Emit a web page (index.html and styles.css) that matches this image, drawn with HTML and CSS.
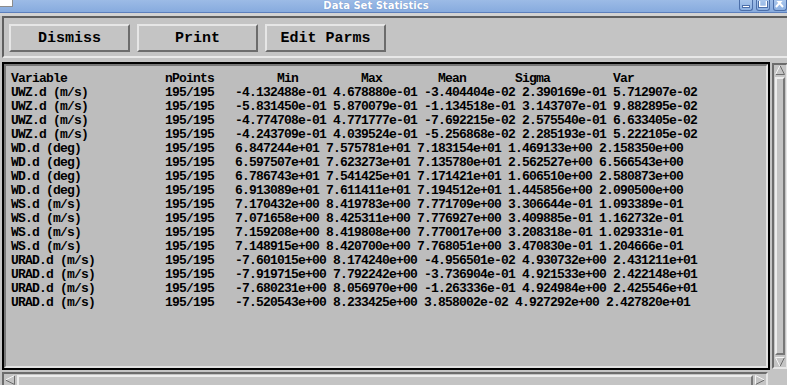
FILE: index.html
```html
<!DOCTYPE html>
<html lang="en">
<head>
  <meta charset="UTF-8">
  <title>Data Set Statistics</title>
  <link rel="stylesheet" href="styles.css">
</head>
<body>

  <div class="titlebar">
    <span class="win-icon"></span>
    <span class="title">Data Set Statistics</span>
    <div class="win-buttons">
      <span class="wbtn">
        <svg width="10" height="8" viewBox="0 0 10 8"><rect x="1.5" y="4.5" width="7" height="2" fill="#fff" stroke="#4c6fa9"/></svg>
      </span>
      <span class="wbtn">
        <svg width="10" height="8" viewBox="0 0 10 8"><rect x="1.5" y="-2.5" width="7" height="8" fill="none" stroke="#fff" stroke-width="1.5"/><rect x="0.5" y="-3.5" width="9" height="10" fill="none" stroke="#4c6fa9"/></svg>
      </span>
      <span class="wbtn">
        <svg width="10" height="8" viewBox="0 0 10 8"><path d="M1 -2 L8 6 M8 -2 L1 6" stroke="#fff" stroke-width="2"/></svg>
      </span>
    </div>
  </div>
  <div class="edge"></div>

  <div class="toolbar">
    <button class="btn">Dismiss</button>
    <button class="btn">Print</button>
    <button class="btn">Edit Parms</button>
  </div>

  <div class="main">
    <div class="textframe">
      <div class="textbox">
<pre class="stats">Variable              nPoints         Min         Max        Mean       Sigma         Var
UWZ.d (m/s)           195/195   -4.132488e-01 4.678880e-01 -3.404404e-02 2.390169e-01 5.712907e-02
UWZ.d (m/s)           195/195   -5.831450e-01 5.870079e-01 -1.134518e-01 3.143707e-01 9.882895e-02
UWZ.d (m/s)           195/195   -4.774708e-01 4.771777e-01 -7.692215e-02 2.575540e-01 6.633405e-02
UWZ.d (m/s)           195/195   -4.243709e-01 4.039524e-01 -5.256868e-02 2.285193e-01 5.222105e-02
WD.d (deg)            195/195   6.847244e+01 7.575781e+01 7.183154e+01 1.469133e+00 2.158350e+00
WD.d (deg)            195/195   6.597507e+01 7.623273e+01 7.135780e+01 2.562527e+00 6.566543e+00
WD.d (deg)            195/195   6.786743e+01 7.541425e+01 7.171421e+01 1.606510e+00 2.580873e+00
WD.d (deg)            195/195   6.913089e+01 7.611411e+01 7.194512e+01 1.445856e+00 2.090500e+00
WS.d (m/s)            195/195   7.170432e+00 8.419783e+00 7.771709e+00 3.306644e-01 1.093389e-01
WS.d (m/s)            195/195   7.071658e+00 8.425311e+00 7.776927e+00 3.409885e-01 1.162732e-01
WS.d (m/s)            195/195   7.159208e+00 8.419808e+00 7.770017e+00 3.208318e-01 1.029331e-01
WS.d (m/s)            195/195   7.148915e+00 8.420700e+00 7.768051e+00 3.470830e-01 1.204666e-01
URAD.d (m/s)          195/195   -7.601015e+00 8.174240e+00 -4.956501e-02 4.930732e+00 2.431211e+01
URAD.d (m/s)          195/195   -7.919715e+00 7.792242e+00 -3.736904e-01 4.921533e+00 2.422148e+01
URAD.d (m/s)          195/195   -7.680231e+00 8.056970e+00 -1.263336e-01 4.924984e+00 2.425546e+01
URAD.d (m/s)          195/195   -7.520543e+00 8.233425e+00 3.858002e-02 4.927292e+00 2.427820e+01</pre>
      </div>
    </div>

    <div class="vscroll">
      <svg class="arrow" width="10" height="10" viewBox="0 0 10 10">
        <polygon points="5,0.5 9.5,9.5 0.5,9.5" fill="#c4c4c4"/>
        <path d="M5 0.5 L9.5 9.5 H0.5" fill="none" stroke="#6c6c6c"/>
        <path d="M0.5 9.5 L5 0.5" fill="none" stroke="#f4f4f4"/>
      </svg>
      <div class="slider"></div>
      <svg class="arrow" width="10" height="10" viewBox="0 0 10 10">
        <polygon points="0.5,0.5 9.5,0.5 5,9.5" fill="#c4c4c4"/>
        <path d="M9.5 0.5 L5 9.5" fill="none" stroke="#6c6c6c"/>
        <path d="M5 9.5 L0.5 0.5 H9.5" fill="none" stroke="#f4f4f4"/>
      </svg>
    </div>
  </div>

  <div class="hbar">
    <div class="hscroll">
      <svg class="arrow" width="10" height="10" viewBox="0 0 10 10">
        <polygon points="0.5,5 9.5,0.5 9.5,9.5" fill="#c4c4c4"/>
        <path d="M9.5 0.5 V9.5 L0.5 5" fill="none" stroke="#6c6c6c"/>
        <path d="M0.5 5 L9.5 0.5" fill="none" stroke="#f4f4f4"/>
      </svg>
      <div class="slider"></div>
      <svg class="arrow" width="10" height="10" viewBox="0 0 10 10">
        <polygon points="0.5,0.5 9.5,5 0.5,9.5" fill="#c4c4c4"/>
        <path d="M9.5 5 L0.5 9.5" fill="none" stroke="#6c6c6c"/>
        <path d="M0.5 9.5 V0.5 L9.5 5" fill="none" stroke="#f4f4f4"/>
      </svg>
    </div>
  </div>

</body>
</html>
```

FILE: styles.css
```css
body {
  margin: 0;
  width: 787px;
  height: 385px;
  overflow: hidden;
  background-color: #c4c4c4;
  font-family: "Liberation Mono", monospace;
}
.titlebar {
  display: flex;
  height: 12px;
  overflow: hidden;
  border-bottom: 1px solid #5d80bd;
  background: linear-gradient(#9cbbe6, #87abde);
}
.win-icon {
  flex-shrink: 0;
  width: 12px;
  height: 6px;
  background-color: #ffffff;
  border-right: 1px solid #8c8c8c;
  border-bottom: 1px solid #8c8c8c;
}
.title {
  flex: 1;
  text-align: center;
  font: bold 10px/12px "DejaVu Sans", sans-serif;
  color: #ffffff;
  text-shadow: 0 0 1px #5a7db8;
}
.win-buttons {
  display: flex;
  flex-shrink: 0;
  gap: 3px;
  width: 48px;
}
.wbtn {
  display: flex;
  align-items: flex-end;
  justify-content: center;
  flex-shrink: 0;
  width: 12px;
  height: 10px;
  border: 1px solid #4c6fa9;
  border-top: none;
  border-radius: 0 0 3px 3px;
  background: linear-gradient(#a9c6ec, #8db1e2);
}
.wbtn svg {
  display: block;
  margin-bottom: 1px;
}
.edge {
  height: 3px;
  background-color: #d3d3d3;
}
.toolbar {
  display: flex;
  gap: 7px;
  margin-left: 2px;
  height: 32px;
  padding: 6px 0 0 5px;
  border-top: 2px solid #5f5f5f;
  border-left: 2px solid #5f5f5f;
  border-bottom: 2px solid #e8e8e8;
}
.btn {
  width: 121px;
  height: 28px;
  padding: 0;
  border: 2px solid;
  border-color: #e6e6e6 #6c6c6c #6c6c6c #e6e6e6;
  background-color: #c4c4c4;
  color: #000000;
  font: bold 15px "Liberation Mono", monospace;
}
.main {
  display: flex;
  height: 308px;
  margin: 4px 0 0 2px;
}
.textframe {
  flex-shrink: 0;
  width: 768px;
  box-sizing: border-box;
  border: 2px solid #000000;
}
.textbox {
  height: 100%;
  box-sizing: border-box;
  padding: 6px 0 0 5px;
  border: 2px solid;
  border-color: #777777 #e3e3e3 #e3e3e3 #777777;
  background-color: #bdbdbd;
}
.stats {
  margin: 0;
  font: bold 13px/14px "Liberation Mono", monospace;
  letter-spacing: -0.8px;
  color: #000000;
}
.vscroll {
  display: flex;
  flex-direction: column;
  gap: 2px;
  flex-shrink: 0;
  width: 16px;
  height: 306px;
  box-sizing: border-box;
  margin: 1px 0 0 2px;
  padding-left: 1px;
  border: 2px solid;
  border-color: #6c6c6c #e6e6e6 #e6e6e6 #6c6c6c;
}
.arrow {
  display: block;
  flex-shrink: 0;
}
.slider {
  flex: 1;
  box-sizing: border-box;
  border: 2px solid;
  border-color: #ececec #777777 #777777 #ececec;
}
.vscroll .slider {
  width: 10px;
}
.hbar {
  display: flex;
  margin: 2px 0 0 2px;
}
.hscroll {
  display: flex;
  gap: 2px;
  width: 766px;
  height: 16px;
  box-sizing: border-box;
  padding: 1px 1px 0 1px;
  border: 2px solid;
  border-color: #6c6c6c #e6e6e6 #e6e6e6 #6c6c6c;
}
.hscroll .slider {
  height: 12px;
}
```
